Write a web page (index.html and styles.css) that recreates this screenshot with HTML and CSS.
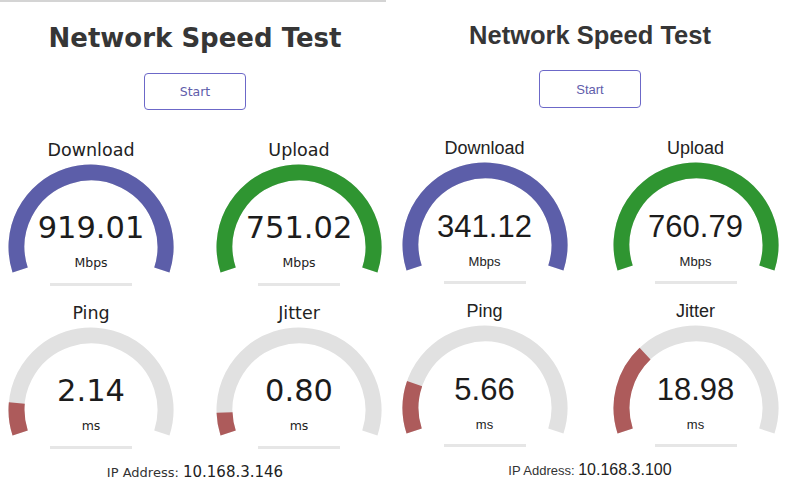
FILE: index.html
```html
<!DOCTYPE html>
<html lang="en">
<head>
    <meta charset="UTF-8">
    <meta name="viewport" content="width=device-width, initial-scale=1.0">
    <title>Network Speed Test</title>
    <link rel="stylesheet" href="styles.css">
</head>
<body>

    <div class="screens">

        <!-- Linux rendering -->
        <div class="panel panel-a">
            <h2>Network Speed Test</h2>
            <button class="start-btn">Start</button>

            <div class="gauges">
                <div class="gauge">
                    <div class="gauge-label">Download</div>
                    <div class="dial">
                        <svg width="166" height="110" viewBox="0 0 166 110">
                            <circle class="track" cx="83" cy="83" r="74.5" pathLength="100" transform="rotate(162 83 83)" stroke-dasharray="60 40"/>
                            <circle class="fill download" cx="83" cy="83" r="74.5" pathLength="100" transform="rotate(162 83 83)" stroke-dasharray="60 40"/>
                        </svg>
                        <div class="dial-value">919.01</div>
                        <div class="dial-unit">Mbps</div>
                    </div>
                    <div class="gauge-bar"></div>
                </div>
                <div class="gauge">
                    <div class="gauge-label">Upload</div>
                    <div class="dial">
                        <svg width="166" height="110" viewBox="0 0 166 110">
                            <circle class="track" cx="83" cy="83" r="74.5" pathLength="100" transform="rotate(162 83 83)" stroke-dasharray="60 40"/>
                            <circle class="fill upload" cx="83" cy="83" r="74.5" pathLength="100" transform="rotate(162 83 83)" stroke-dasharray="60 40"/>
                        </svg>
                        <div class="dial-value">751.02</div>
                        <div class="dial-unit">Mbps</div>
                    </div>
                    <div class="gauge-bar"></div>
                </div>
                <div class="gauge">
                    <div class="gauge-label">Ping</div>
                    <div class="dial">
                        <svg width="166" height="110" viewBox="0 0 166 110">
                            <circle class="track" cx="83" cy="83" r="74.5" pathLength="100" transform="rotate(162 83 83)" stroke-dasharray="60 40"/>
                            <circle class="fill latency" cx="83" cy="83" r="74.5" pathLength="100" transform="rotate(162 83 83)" stroke-dasharray="6.5 93.5"/>
                        </svg>
                        <div class="dial-value">2.14</div>
                        <div class="dial-unit">ms</div>
                    </div>
                    <div class="gauge-bar"></div>
                </div>
                <div class="gauge">
                    <div class="gauge-label">Jitter</div>
                    <div class="dial">
                        <svg width="166" height="110" viewBox="0 0 166 110">
                            <circle class="track" cx="83" cy="83" r="74.5" pathLength="100" transform="rotate(162 83 83)" stroke-dasharray="60 40"/>
                            <circle class="fill latency" cx="83" cy="83" r="74.5" pathLength="100" transform="rotate(162 83 83)" stroke-dasharray="4.5 95.5"/>
                        </svg>
                        <div class="dial-value">0.80</div>
                        <div class="dial-unit">ms</div>
                    </div>
                    <div class="gauge-bar"></div>
                </div>
            </div>

            <div class="ip">IP Address: <span class="ip-value">10.168.3.146</span></div>
        </div>

        <!-- Windows rendering -->
        <div class="panel panel-b">
            <h2>Network Speed Test</h2>
            <button class="start-btn">Start</button>

            <div class="gauges">
                <div class="gauge">
                    <div class="gauge-label">Download</div>
                    <div class="dial">
                        <svg width="166" height="110" viewBox="0 0 166 110">
                            <circle class="track" cx="83" cy="83" r="74.5" pathLength="100" transform="rotate(162 83 83)" stroke-dasharray="60 40"/>
                            <circle class="fill download" cx="83" cy="83" r="74.5" pathLength="100" transform="rotate(162 83 83)" stroke-dasharray="60 40"/>
                        </svg>
                        <div class="dial-value">341.12</div>
                        <div class="dial-unit">Mbps</div>
                    </div>
                    <div class="gauge-bar"></div>
                </div>
                <div class="gauge">
                    <div class="gauge-label">Upload</div>
                    <div class="dial">
                        <svg width="166" height="110" viewBox="0 0 166 110">
                            <circle class="track" cx="83" cy="83" r="74.5" pathLength="100" transform="rotate(162 83 83)" stroke-dasharray="60 40"/>
                            <circle class="fill upload" cx="83" cy="83" r="74.5" pathLength="100" transform="rotate(162 83 83)" stroke-dasharray="60 40"/>
                        </svg>
                        <div class="dial-value">760.79</div>
                        <div class="dial-unit">Mbps</div>
                    </div>
                    <div class="gauge-bar"></div>
                </div>
                <div class="gauge">
                    <div class="gauge-label">Ping</div>
                    <div class="dial">
                        <svg width="166" height="110" viewBox="0 0 166 110">
                            <circle class="track" cx="83" cy="83" r="74.5" pathLength="100" transform="rotate(162 83 83)" stroke-dasharray="60 40"/>
                            <circle class="fill latency" cx="83" cy="83" r="74.5" pathLength="100" transform="rotate(162 83 83)" stroke-dasharray="10.3 89.7"/>
                        </svg>
                        <div class="dial-value">5.66</div>
                        <div class="dial-unit">ms</div>
                    </div>
                    <div class="gauge-bar"></div>
                </div>
                <div class="gauge">
                    <div class="gauge-label">Jitter</div>
                    <div class="dial">
                        <svg width="166" height="110" viewBox="0 0 166 110">
                            <circle class="track" cx="83" cy="83" r="74.5" pathLength="100" transform="rotate(162 83 83)" stroke-dasharray="60 40"/>
                            <circle class="fill latency" cx="83" cy="83" r="74.5" pathLength="100" transform="rotate(162 83 83)" stroke-dasharray="18 82"/>
                        </svg>
                        <div class="dial-value">18.98</div>
                        <div class="dial-unit">ms</div>
                    </div>
                    <div class="gauge-bar"></div>
                </div>
            </div>

            <div class="ip">IP Address: <span class="ip-value">10.168.3.100</span></div>
        </div>

    </div>

</body>
</html>
```

FILE: styles.css
```css
body {
    margin: 0;
    background-color: #ffffff;
    color: #222;
}

.screens {
    display: flex;
}

.panel {
    text-align: center;
}

.panel-a {
    width: 390px;
    font-family: 'DejaVu Sans', sans-serif;
}

.panel-a::before {
    content: '';
    display: block;
    width: 386px;
    height: 2px;
    background-color: #d4d4d4;
}

.panel-b {
    width: 400px;
    font-family: 'Liberation Sans', Arial, sans-serif;
}

h2 {
    margin: 21px 0 0;
    line-height: 30px;
    font-size: 26px;
    color: #363636;
}

.panel-b h2 {
    margin-top: 20px;
    font-size: 25.5px;
}

.start-btn {
    display: block;
    width: 102px;
    height: 37px;
    margin: 20px auto 0;
    padding: 0;
    background-color: #fff;
    border: 1px solid #6c68c8;
    border-radius: 4px;
    color: #5f5dab;
    font-family: inherit;
    font-size: 12.5px;
    cursor: pointer;
}

.panel-b .start-btn {
    height: 38px;
    font-size: 13px;
}

.start-btn:hover {
    opacity: 0.8;
}

/* gauges */

.gauges {
    display: grid;
    grid-template-columns: 208px 208px;
    justify-content: center;
    row-gap: 17px;
    margin-top: 30px;
}

.panel-b .gauges {
    grid-template-columns: 211px 211px;
}

.gauge-label {
    line-height: 20px;
    font-size: 17.5px;
    color: #222;
}

.panel-b .gauge-label {
    font-size: 18px;
}

.dial {
    position: relative;
    width: 166px;
    height: 110px;
    margin: 4px auto 0;
}

.dial svg {
    display: block;
}

.track,
.fill {
    fill: none;
    stroke-width: 16;
}

.track {
    stroke: #e1e1e1;
}

.fill.download {
    stroke: #5c5ea9;
}

.fill.upload {
    stroke: #2f9531;
}

.fill.latency {
    stroke: #ad5b5b;
}

.dial-value {
    position: absolute;
    top: 49px;
    left: 0;
    right: 0;
    line-height: 1;
    font-size: 30.5px;
    color: #1c1c1c;
}

.panel-b .dial-value {
    font-size: 31px;
}

.dial-unit {
    position: absolute;
    top: 93px;
    left: 0;
    right: 0;
    line-height: 1;
    font-size: 12.5px;
    color: #222;
}

.panel-b .dial-unit {
    font-size: 13px;
}

.gauge-bar {
    width: 82px;
    height: 3px;
    margin: 9px auto 0;
    background-color: #e6e6e6;
}

.ip {
    margin-top: 13px;
    line-height: 20px;
    font-size: 13px;
    color: #333;
}

.ip-value {
    font-size: 15px;
    color: #222;
}

.panel-b .ip-value {
    font-size: 16px;
}
```
